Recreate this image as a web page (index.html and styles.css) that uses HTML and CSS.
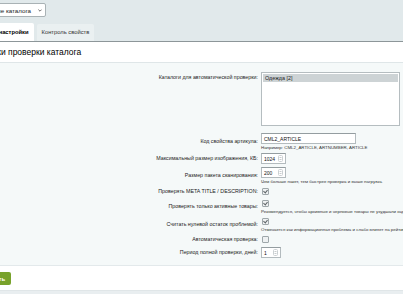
FILE: index.html
```html
<!DOCTYPE html>
<html lang="ru">
<head>
    <meta charset="UTF-8">
    <meta name="viewport" content="width=device-width, initial-scale=1.0">
    <title>Настройки проверки каталога</title>
    <link rel="stylesheet" href="styles.css">
</head>
<body>
    <div class="page">
        <div class="top-bar">
            <div class="catalog-select">
                <span>Выбранные каталога</span>
                <svg class="select-arrow" width="4" height="3" viewBox="0 0 4 3"><path d="M0.4 0.6 2 2.2 3.6 0.6" fill="none" stroke="#333" stroke-width="0.7"/></svg>
            </div>
            <div class="tabs">
                <div class="tab active">Основные настройки</div>
                <div class="tab">Контроль свойств</div>
            </div>
        </div>

        <div class="panel">
            <h2 class="panel-title">Настройки проверки каталога</h2>

            <div class="form">
                <div class="row row-top">
                    <div class="label">Каталоги для автоматической проверки:</div>
                    <div class="value">
                        <div class="multi-select">
                            <div class="option selected">Одежда [2]</div>
                        </div>
                    </div>
                </div>

                <div class="row">
                    <div class="label">Код свойства артикула:</div>
                    <div class="value">
                        <div class="input wide">CML2_ARTICLE</div>
                        <div class="hint">Например: CML2_ARTICLE, ARTNUMBER, ARTICLE</div>
                    </div>
                </div>

                <div class="row">
                    <div class="label">Максимальный размер изображения, КБ:</div>
                    <div class="value">
                        <div class="input number">1024
                            <svg class="spin" width="5" height="7" viewBox="0 0 5 7"><rect x="0.5" y="0.5" width="4" height="6" rx="1" fill="none" stroke="#cbd1d3"/><path d="M1.6 3 2.5 2 3.4 3M1.6 4 2.5 5 3.4 4" fill="none" stroke="#9aa3a6" stroke-width="0.6"/></svg>
                        </div>
                    </div>
                </div>

                <div class="row">
                    <div class="label">Размер пакета сканирования:</div>
                    <div class="value">
                        <div class="input number">200
                            <svg class="spin" width="5" height="7" viewBox="0 0 5 7"><rect x="0.5" y="0.5" width="4" height="6" rx="1" fill="none" stroke="#cbd1d3"/><path d="M1.6 3 2.5 2 3.4 3M1.6 4 2.5 5 3.4 4" fill="none" stroke="#9aa3a6" stroke-width="0.6"/></svg>
                        </div>
                        <div class="hint">Чем больше пакет, тем быстрее проверка и выше нагрузка.</div>
                    </div>
                </div>

                <div class="row">
                    <div class="label">Проверять META TITLE / DESCRIPTION:</div>
                    <div class="value">
                        <span class="checkbox checked"></span>
                    </div>
                </div>

                <div class="row">
                    <div class="label">Проверять только активные товары:</div>
                    <div class="value">
                        <span class="checkbox checked"></span>
                        <div class="hint">Рекомендуется, чтобы архивные и черновые товары не ухудшали оценку каталога.</div>
                    </div>
                </div>

                <div class="row">
                    <div class="label">Считать нулевой остаток проблемой:</div>
                    <div class="value">
                        <span class="checkbox checked"></span>
                        <div class="hint">Отмечается как информационная проблема и слабо влияет на рейтинг.</div>
                    </div>
                </div>

                <div class="row">
                    <div class="label">Автоматическая проверка:</div>
                    <div class="value">
                        <span class="checkbox"></span>
                    </div>
                </div>

                <div class="row">
                    <div class="label">Период полной проверки, дней:</div>
                    <div class="value">
                        <div class="input number small">1
                            <svg class="spin" width="5" height="7" viewBox="0 0 5 7"><rect x="0.5" y="0.5" width="4" height="6" rx="1" fill="none" stroke="#cbd1d3"/><path d="M1.6 3 2.5 2 3.4 3M1.6 4 2.5 5 3.4 4" fill="none" stroke="#9aa3a6" stroke-width="0.6"/></svg>
                        </div>
                    </div>
                </div>
            </div>

            <div class="buttons">
                <button class="btn-save">Сохранить</button>
            </div>
        </div>
        <div class="footer"></div>
    </div>
</body>
</html>
```

FILE: styles.css
```css
body {
    margin: 0;
    overflow: hidden;
    background: #fff;
    font-family: "Liberation Sans", Arial, sans-serif;
    color: #000;
}

.page {
    margin-left: -40px;
    width: 520px;
}

.top-bar {
    background: #e1e9eb;
    padding-top: 3px;
    border-bottom: 1px solid #8d9699;
}

.catalog-select {
    display: flex;
    align-items: center;
    justify-content: flex-end;
    gap: 7px;
    width: 78px;
    height: 14px;
    margin-left: 8px;
    padding-right: 3px;
    box-sizing: border-box;
    background: #fff;
    border: 1px solid #a9b2b5;
    border-radius: 2px;
    font-size: 6.2px;
    color: #222;
    white-space: nowrap;
    overflow: hidden;
}

.select-arrow {
    flex: none;
}

.tabs {
    display: flex;
    gap: 3px;
    margin-top: 6px;
    margin-left: 0;
}

.tab {
    height: 17px;
    line-height: 17px;
    padding: 0 5px;
    font-size: 5.8px;
    color: #333;
    background: #eaf0f1;
    border-radius: 2px 2px 0 0;
    margin-top: 1px;
    white-space: nowrap;
}

.tab.active {
    padding: 0 5px 0 7px;
    background: #fff;
    font-weight: bold;
    color: #000;
    margin-top: 0;
    height: 18px;
    line-height: 18px;
}

.panel {
    background: #fff;
}

.panel-title {
    margin: 0;
    padding: 4px 0 0 4px;
    height: 16px;
    font-size: 8.5px;
    font-weight: normal;
    line-height: 12px;
    border-bottom: 1px solid #dfe6e8;
}

.form {
    background: #f5f9f9;
    padding: 7px 0 6px;
    border-bottom: 1px solid #e3e9eb;
}

.row {
    display: flex;
    align-items: center;
    gap: 3px;
    padding: 1.5px 0;
}

.row-top {
    align-items: flex-start;
    padding: 2px 0 5px;
}

.label {
    width: 298px;
    flex: none;
    text-align: right;
    font-size: 5.3px;
    color: #222;
}

.row-top .label {
    padding-top: 2px;
}

.value {
    display: flex;
    flex-direction: column;
    align-items: flex-start;
}

.multi-select {
    width: 139px;
    height: 54px;
    box-sizing: border-box;
    padding: 1px;
    background: #fff;
    border: 1px solid #b5bdc0;
}

.option {
    height: 8px;
    line-height: 8px;
    padding-left: 2px;
    font-size: 5.4px;
    color: #222;
}

.option.selected {
    background: #cdd3d5;
}

.input {
    position: relative;
    height: 11px;
    line-height: 10px;
    box-sizing: border-box;
    padding-left: 2px;
    background: #fff;
    border: 1px solid #b3bbbe;
    border-top-color: #949da0;
    font-size: 5px;
    color: #111;
}

.input.wide {
    width: 95px;
}

.input.number {
    width: 25px;
}

.input.small {
    width: 20px;
}

.spin {
    position: absolute;
    right: 2px;
    top: 1px;
}

.hint {
    font-size: 4.4px;
    color: #333;
    margin-top: 1px;
    line-height: 5px;
    white-space: nowrap;
}

.checkbox {
    position: relative;
    display: block;
    width: 7px;
    height: 7px;
    box-sizing: border-box;
    margin: 1px 0 1px 1px;
    background: #eef1f2;
    border: 1px solid #9ea7aa;
    border-radius: 1px;
}

.checkbox.checked::after {
    content: "";
    position: absolute;
    left: 1px;
    top: 0;
    width: 2px;
    height: 3px;
    border: solid #5d6467;
    border-width: 0 1px 1px 0;
    transform: rotate(40deg);
}

.buttons {
    padding: 6px 0 5px;
    border-bottom: 1px solid #e0e6e8;
}

.btn-save {
    display: block;
    height: 13px;
    padding: 0 6px 0 7px;
    border: none;
    border-radius: 2px;
    background: #78a22b;
    color: #fff;
    font-family: "Liberation Sans", Arial, sans-serif;
    font-size: 6px;
    font-weight: bold;
    margin-left: 6px;
}

.footer {
    height: 10px;
    background: #e9eef0;
}
```
